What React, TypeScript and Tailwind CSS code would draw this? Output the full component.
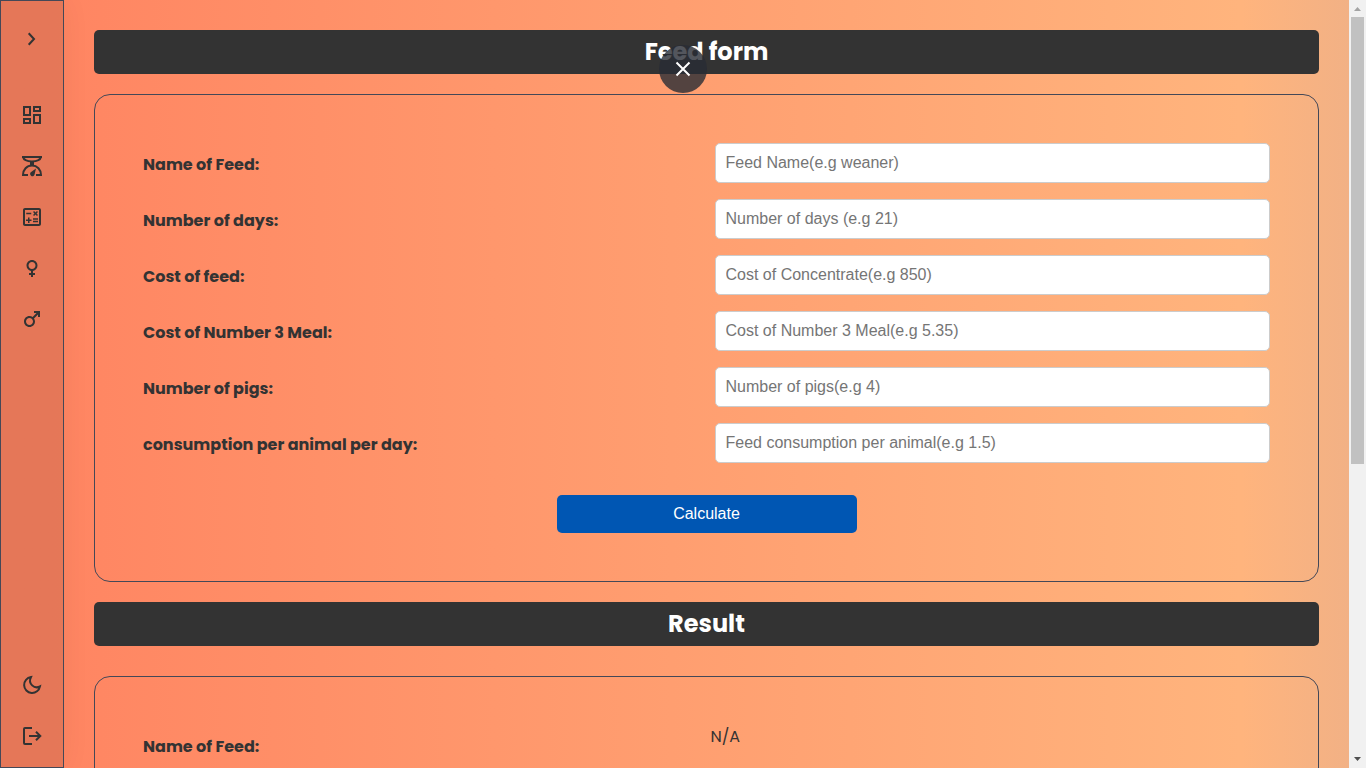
import { useState, type ReactNode } from 'react';
import { MdOutlineDashboard, MdOutlineCalculate, MdFemale, MdMale } from 'react-icons/md';

const fields = [
  { id: 'feed-name', label: 'Name of Feed:', placeholder: 'Feed Name(e.g weaner)' },
  { id: 'days', label: 'Number of days:', placeholder: 'Number of days (e.g 21)' },
  { id: 'feed-cost', label: 'Cost of feed:', placeholder: 'Cost of Concentrate(e.g 850)' },
  { id: 'meal-cost', label: 'Cost of Number 3 Meal:', placeholder: 'Cost of Number 3 Meal(e.g 5.35)' },
  { id: 'pigs', label: 'Number of pigs:', placeholder: 'Number of pigs(e.g 4)' },
  { id: 'consumption', label: 'consumption per animal per day:', placeholder: 'Feed consumption per animal(e.g 1.5)' },
];

function ChevronIcon() {
  return (
    <svg viewBox="0 0 24 24" className="size-6" fill="none" stroke="currentColor" strokeWidth="2">
      <path d="M8.700 6.300l5.300 5.700-5.300 5.700" />
    </svg>
  );
}

function ScaleIcon() {
  return (
    <svg viewBox="0 0 24 24" className="size-6" fill="none" stroke="currentColor" strokeWidth="2">
      <path d="M2 3h20" />
      <path d="M3 3c.8 3 4.300 4.400 9 4.400S20.200 6 21 3" />
      <path d="M12 7v5" strokeWidth="4" />
      <path d="M8 21H3c0-5.500 3.800-9.500 9-9.500s9 4 9 9.500h-5" />
      <path d="M16 14.600l-1.300 5.400a2.300 2.300 0 1 1-3.600-2z" fill="currentColor" stroke="none" />
    </svg>
  );
}

function MoonIcon() {
  return (
    <svg viewBox="0 0 24 24" className="size-6" fill="none" stroke="currentColor" strokeWidth="2">
      <path d="M11 4A8 8 0 1 0 20 13.400C14.500 16.400 7.600 10.800 11 4z" />
    </svg>
  );
}

function LogoutIcon() {
  return (
    <svg viewBox="0 0 24 24" className="size-6" fill="none" stroke="currentColor" strokeWidth="2">
      <path d="M12 4H5a1 1 0 0 0-1 1v14a1 1 0 0 0 1 1h7" />
      <path d="M9 12h11M16 7.700l4.300 4.300-4.300 4.300" />
    </svg>
  );
}

function NavLink({ label, children }: { label: string; children: ReactNode }) {
  return (
    <a href="#" aria-label={label} className="flex h-[51px] items-center justify-center">
      {children}
    </a>
  );
}

function SectionTitle({ children }: { children: ReactNode }) {
  return (
    <h2 className="rounded-[5px] bg-[#333] text-center text-2xl/[44px] font-bold text-white">
      {children}
    </h2>
  );
}

export default function App() {
  const [name, setName] = useState('');
  return (
    <div className="flex h-screen overflow-hidden bg-[#f0f0f0] font-[Poppins,Inter,sans-serif] text-[#333]">
      <div className="relative flex min-w-0 flex-1 bg-linear-to-r from-[#ff8562] from-4% via-[#ffb47d] via-92% to-[#f2b185]">
        <nav className="flex w-16 shrink-0 flex-col border border-[#444857] bg-black/10 shadow-[0_0_30px_rgba(0,0,0,0.05)]">
          <button aria-label="Expand menu" className="mt-3 mb-[25px] flex h-[51px] items-center justify-center">
            <ChevronIcon />
          </button>
          <NavLink label="Dashboard"><MdOutlineDashboard size={24} /></NavLink>
          <NavLink label="Weight"><ScaleIcon /></NavLink>
          <NavLink label="Calculator"><MdOutlineCalculate size={24} /></NavLink>
          <NavLink label="Sows"><MdFemale size={24} /></NavLink>
          <NavLink label="Boars"><MdMale size={24} /></NavLink>
          <div className="mt-auto mb-1.5">
            <button aria-label="Dark mode" className="flex h-[51px] w-full items-center justify-center">
              <MoonIcon />
            </button>
            <NavLink label="Log out"><LogoutIcon /></NavLink>
          </div>
        </nav>

        <main className="min-w-0 flex-1 overflow-hidden p-[30px]">
          <SectionTitle>Feed form</SectionTitle>
          <form
            className="mt-5 rounded-2xl border border-[#444857] p-12 pt-10"
            onSubmit={(event) => event.preventDefault()}
          >
            {fields.map((field, index) => (
              <div key={field.id} className="grid grid-cols-2 items-center gap-4 py-2">
                <label htmlFor={field.id} className="pt-1 font-bold">{field.label}</label>
                <input
                  id={field.id}
                  placeholder={field.placeholder}
                  onChange={index === 0 ? (event) => setName(event.target.value) : undefined}
                  className="h-10 rounded-[5px] border border-[#ccc] bg-white px-2.5 font-[Liberation_Sans,sans-serif] text-base placeholder:text-[#757575]"
                />
              </div>
            ))}
            <button
              type="submit"
              className="mx-auto mt-6 block h-[38px] w-[300px] rounded-[5px] bg-[#0056b3] font-[Liberation_Sans,sans-serif] text-base text-white"
            >
              Calculate
            </button>
          </form>

          <div className="mt-5">
            <SectionTitle>Result</SectionTitle>
          </div>
          <section className="mt-[30px] rounded-2xl border border-[#444857] p-12">
            <div className="grid grid-cols-2 gap-2">
              <span className="pt-2.5 font-bold">Name of Feed:</span>
              <output htmlFor="feed-name">{name || 'N/A'}</output>
            </div>
          </section>
        </main>
      </div>

      <button
        aria-label="Close"
        className="fixed top-[45px] left-1/2 flex size-12 -translate-x-1/2 items-center justify-center rounded-full bg-[#282c34]/80 text-white"
      >
        <svg viewBox="0 0 24 24" className="size-6" fill="none" stroke="currentColor" strokeWidth="2">
          <path d="M5.500 5.500l13 13M18.500 5.500l-13 13" />
        </svg>
      </button>

      <div aria-hidden="true" className="flex w-[17px] shrink-0 flex-col items-center bg-[#f1f1f1]">
        <svg viewBox="0 0 17 17" className="size-[17px] shrink-0" fill="#a3a3a3"><path d="M5 11h7L8.500 7z" /></svg>
        <div className="h-[447px] w-[13px] bg-[#c1c1c1]" />
        <svg viewBox="0 0 17 17" className="mt-auto size-[17px] shrink-0" fill="#505050"><path d="M5 6h7l-3.500 4z" /></svg>
      </div>
    </div>
  );
}
